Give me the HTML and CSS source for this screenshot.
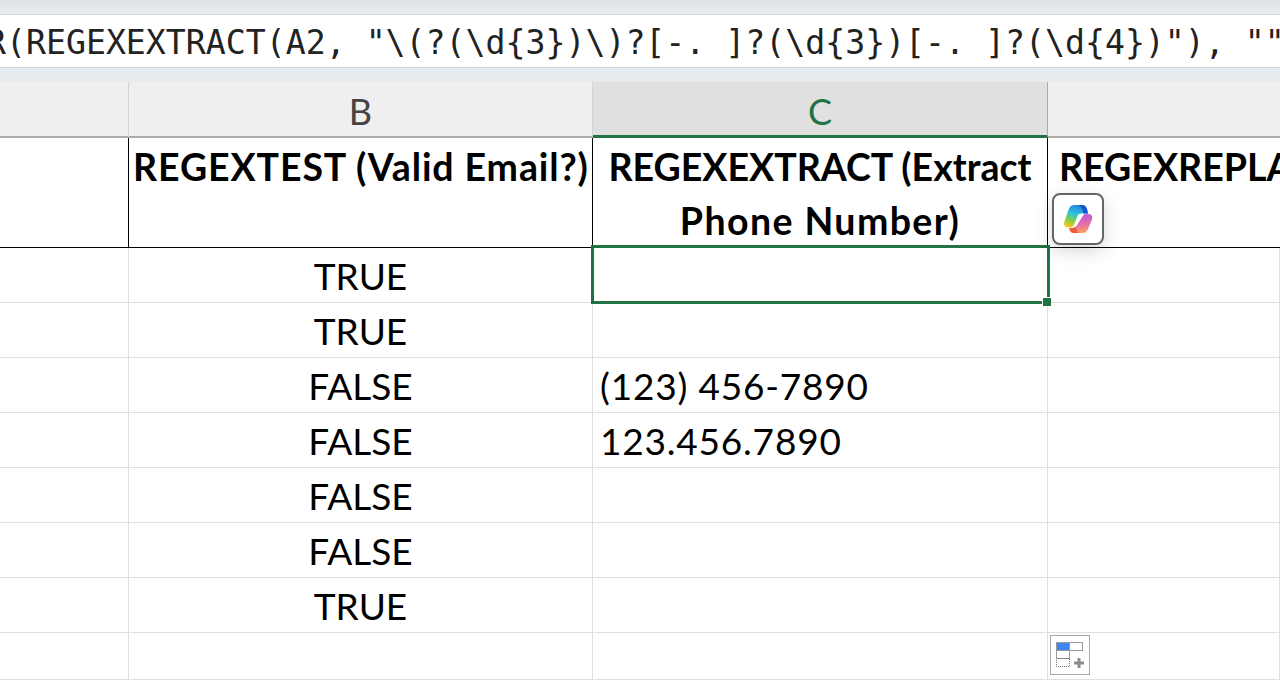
FILE: index.html
```html
<!DOCTYPE html>
<html lang="en">
<head>
    <meta charset="UTF-8">
    <meta name="viewport" content="width=device-width, initial-scale=1.0">
    <title>Regex functions</title>
    <link rel="stylesheet" href="styles.css">
</head>
<body>
    <div class="ribbon-edge"></div>
    <div class="formula-bar"><span class="formula-text">R(REGEXEXTRACT(A2, "\(?(\d{3})\)?[-. ]?(\d{3})[-. ]?(\d{4})"), ""</span></div>
    <div class="bar-gap"></div>
    <main class="sheet">
        <div class="col-head"></div>
        <div class="col-head">B</div>
        <div class="col-head col-active">C</div>
        <div class="col-head col-last"></div>

        <div class="cell title-row"></div>
        <div class="cell title-row title-cell title-wide">REGEXTEST (Valid Email?)</div>
        <div class="cell title-row title-cell title-center"><span class="title-line">REGEXEXTRACT (Extract</span> <span class="title-line title-wide">Phone Number)</span></div>
        <div class="cell title-row title-cell title-clip">REGEXREPLACE (Mask Email)</div>

        <div class="cell"></div><div class="cell center">TRUE</div><div class="cell"></div><div class="cell"></div>
        <div class="cell"></div><div class="cell center">TRUE</div><div class="cell"></div><div class="cell"></div>
        <div class="cell"></div><div class="cell center">FALSE</div><div class="cell number">(123) 456-7890</div><div class="cell"></div>
        <div class="cell"></div><div class="cell center">FALSE</div><div class="cell number">123.456.7890</div><div class="cell"></div>
        <div class="cell"></div><div class="cell center">FALSE</div><div class="cell"></div><div class="cell"></div>
        <div class="cell"></div><div class="cell center">FALSE</div><div class="cell"></div><div class="cell"></div>
        <div class="cell"></div><div class="cell center">TRUE</div><div class="cell"></div><div class="cell"></div>
        <div class="cell"></div><div class="cell"></div><div class="cell"></div><div class="cell"></div>

        <!-- things floating over the grid -->
        <div class="selection"><span class="fill-handle"></span></div>

        <button class="copilot-btn" aria-label="Copilot">
            <svg width="30" height="30" viewBox="0 0 30 30">
                <defs>
                    <linearGradient id="cp-left" x1="0.7" y1="0" x2="0.3" y2="1">
                        <stop offset="0" stop-color="#1f7fe0"/>
                        <stop offset="0.45" stop-color="#2fc3d8"/>
                        <stop offset="0.75" stop-color="#8ccf3f"/>
                        <stop offset="1" stop-color="#f2c81e"/>
                    </linearGradient>
                    <linearGradient id="cp-right" x1="0.4" y1="0" x2="0.6" y2="1">
                        <stop offset="0" stop-color="#b05ce0"/>
                        <stop offset="0.5" stop-color="#e36bb0"/>
                        <stop offset="1" stop-color="#fba15c"/>
                    </linearGradient>
                </defs>
                <path d="M11 1H19C21.500 1 23 2.500 24 5L25 9.500H18.500C16 9.500 15 10.500 14 13L11.300 20C10.300 22.500 9 23.500 7 23.500H5C2 23.500 .5 21 1.300 18L5 7C6.200 3 8 1 11 1Z" fill="url(#cp-left)"/>
                <path d="M15 1H19C21.500 1 23 2.500 24 5L25 9.500H20.500C19.800 5 18 2 15 1Z" fill="#1a55d0"/>
                <path d="M22.500 10H25.500C28.500 10 30 12.500 29 15.500L25.500 24C24.300 27.500 22 29 19.500 29H11C8.500 29 7 27.500 6.500 25L6.200 24H9.500C12 24 13.300 22.500 14.300 20.500L19.500 12.500C20.300 11 21 10 22.500 10Z" fill="url(#cp-right)"/>
                <path d="M6.200 24H9.500C11 24 12.300 23.300 13.300 22C13 25 13.800 27.500 16 29H11C8.500 29 7 27.500 6.500 25Z" fill="#ef5a3c"/>
            </svg>
        </button>

        <div class="quick-analysis" aria-label="Quick Analysis">
            <svg width="28" height="26" viewBox="0 0 28 26">
                <rect x="0.500" y="0.500" width="13" height="8" fill="#3f86f5" stroke="#9a9a9a"/>
                <rect x="13.500" y="0.500" width="13" height="8" fill="#fff" stroke="#9a9a9a"/>
                <rect x="0.500" y="8.500" width="13" height="8" fill="#fff" stroke="#9a9a9a"/>
                <rect x="0.500" y="16.500" width="13" height="8" fill="none" stroke="#777" stroke-dasharray="1 1" stroke-dashoffset="0.500"/>
                <path d="M18 21h10M23 16v10" stroke="#8c8c8c" stroke-width="3" fill="none"/>
            </svg>
        </div>
    </main>
</body>
</html>
```

FILE: styles.css
```css
html, body {
    margin: 0;
    padding: 0;
    height: 680px;
    overflow: hidden;
    background-color: #fff;
}
.ribbon-edge {
    height: 15px;
    background: linear-gradient(#dfe3e6, #e8edf0);
    border-bottom: 1px solid #d0d3d5;
    box-sizing: border-box;
}
.formula-bar {
    height: 53px;
    box-sizing: border-box;
    background-color: #fff;
    border-bottom: 1px solid #d0d3d5;
    overflow: hidden;
    white-space: nowrap;
    padding-top: 2px;
    line-height: 52px;
}
.formula-text {
    display: inline-block;
    margin-left: -14px;
    font-family: "DejaVu Sans Mono", monospace;
    font-size: 33.2px;
    color: #222;
}
.bar-gap {
    height: 14px;
    background-color: #e6ebef;
}
.sheet {
    position: relative;
    display: grid;
    grid-template-columns: 129px 464px 455px 232px;
    grid-template-rows: 56px 110px repeat(7, 55px) 47px;
    font-family: Lato, "Open Sans", sans-serif;
    font-size: 37px;
    color: #000;
}
.col-head {
    box-sizing: border-box;
    background-color: #efefef;
    border-right: 1px solid #d4d4d4;
    border-bottom: 2px solid #ababab;
    color: #444;
    font-size: 36px;
    line-height: 58px;
    text-align: center;
}
.col-active {
    background-color: #e0e0e0;
    border-right-color: #ababab;
    border-bottom: 3px solid #217346;
    color: #217346;
}
.col-last {
    border-right: none;
}
.cell {
    box-sizing: border-box;
    border-right: 1px solid #e0e0e0;
    border-bottom: 1px solid #e0e0e0;
    padding: 0 7px;
    line-height: 56px;
    white-space: nowrap;
    overflow: hidden;
}
.center {
    text-align: center;
}
.number {
    letter-spacing: 0.8px;
}
.title-row {
    border-right-color: #000;
    border-bottom-color: #000;
}
.title-cell {
    font-weight: 700;
    font-size: 37.5px;
    padding: 2px 4px 0;
    line-height: 54px;
    white-space: normal;
}
.title-wide {
    letter-spacing: 0.9px;
    white-space: nowrap;
}
.title-center {
    text-align: center;
}
.title-line {
    display: block;
}
.title-line.title-wide {
    letter-spacing: 1.4px;
}
.title-clip {
    white-space: nowrap;
    border-right: none;
    padding-left: 11px;
}
.selection {
    position: absolute;
    left: 591px;
    top: 163px;
    width: 459px;
    height: 59px;
    box-sizing: border-box;
    border: 3px solid #217346;
}
.fill-handle {
    position: absolute;
    right: -4px;
    bottom: -5px;
    width: 8px;
    height: 8px;
    background-color: #217346;
    box-shadow: -1px -1px 0 #fff;
}
.copilot-btn {
    position: absolute;
    left: 1052px;
    top: 111px;
    width: 52px;
    height: 52px;
    padding: 0;
    display: flex;
    align-items: center;
    justify-content: center;
    box-sizing: border-box;
    background-color: #fff;
    border: 2px solid #666;
    border-radius: 8px;
    box-shadow: 0 6px 18px rgba(0,0,0,0.16);
}
.quick-analysis {
    position: absolute;
    left: 1050px;
    top: 553px;
    width: 40px;
    height: 40px;
    display: flex;
    align-items: center;
    justify-content: center;
    box-sizing: border-box;
    background-color: #fff;
    border: 1px solid #a8a8a8;
}
```
